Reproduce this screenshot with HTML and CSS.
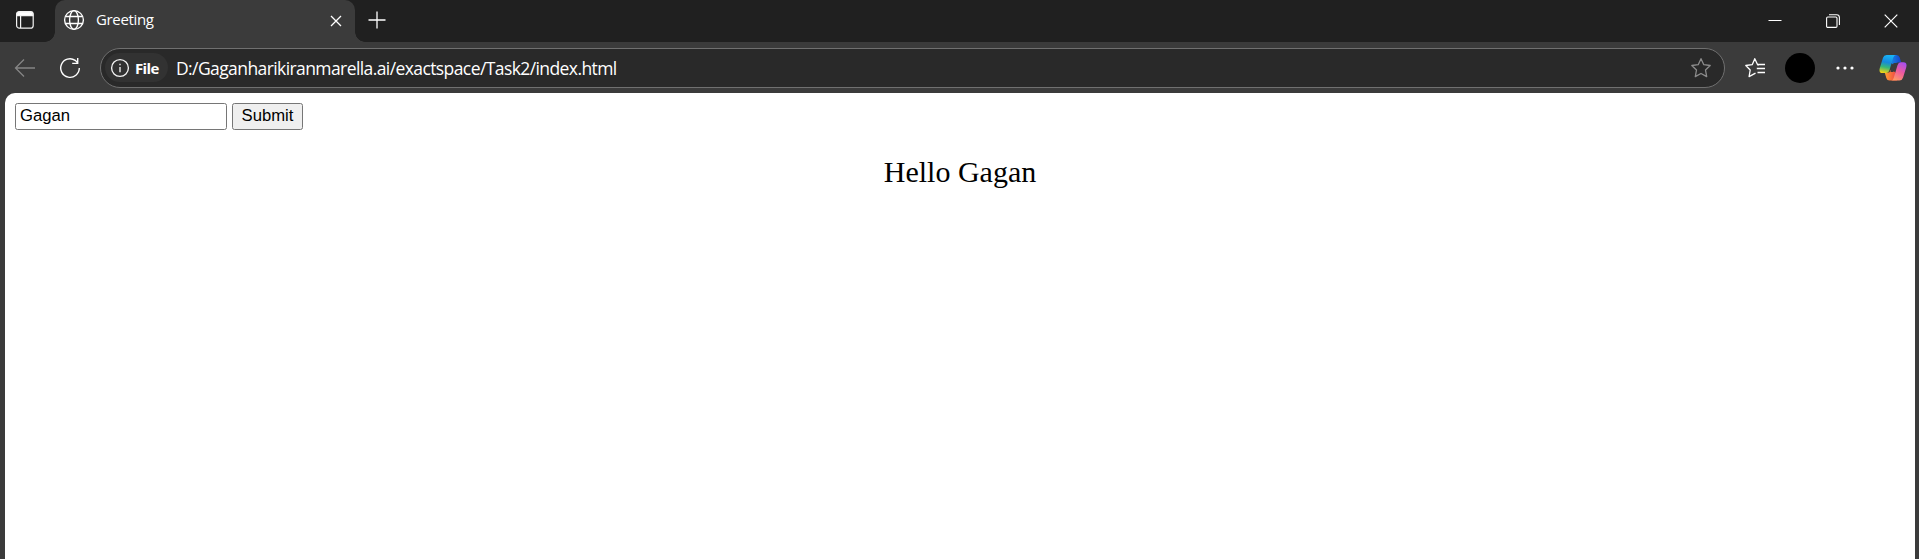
FILE: index.html
```html
<!DOCTYPE html>
<html lang="en">
<head>
<meta charset="utf-8">
<title>Greeting</title>
<link rel="stylesheet" href="styles.css">
</head>
<body>
<div class="browser">
  <header class="tab-strip">
    <div class="tab-actions">
      <svg width="20" height="20" viewBox="0 0 20 20" fill="none" stroke="#f2f2f2" stroke-width="1.2"><rect x="1.6" y="1.6" width="16.6" height="16.6" rx="2.8"/><path d="M2 4.5V3.6Q2 2 3.6 2h12.600q1.600 0 1.600 1.600v2H2z" fill="#fff"/><path d="M5.600 5v13"/></svg>
    </div>
    <div class="tab">
      <svg class="globe" width="22" height="22" viewBox="0 0 22 22" fill="none" stroke="#fff" stroke-width="1.350"><circle cx="11" cy="11" r="9.400"/><ellipse cx="11" cy="11" rx="4.400" ry="9.400"/><path d="M2.300 7.500h17.400M2.300 14.500h17.400"/></svg>
      <span class="tab-title">Greeting</span>
      <svg class="tab-close" width="12" height="12" viewBox="0 0 12 12" stroke="#fff" stroke-width="1.300"><path d="M1 1l10 10M11 1L1 11"/></svg>
    </div>
    <svg class="new-tab" width="18" height="18" viewBox="0 0 18 18" stroke="#fff" stroke-width="1.300"><path d="M9 .5v17M.5 9h17"/></svg>
    <div class="window-controls">
      <svg width="14" height="14" viewBox="0 0 14 14" stroke="#fff"><path d="M.5 6.500h13"/></svg>
      <svg width="14" height="14" viewBox="0 0 14 14" fill="none" stroke="#fff" stroke-width="1.100"><rect x=".6" y="3" width="10.400" height="10.400" rx="1.200"/><path d="M3 .7h7.600q2.800 0 2.800 2.800v7.500"/></svg>
      <svg width="14" height="14" viewBox="0 0 14 14" stroke="#fff" stroke-width="1.200"><path d="M.7.7l12.600 12.600M13.300.7L.7 13.300"/></svg>
    </div>
  </header>
  <nav class="toolbar">
    <svg class="back" width="22" height="20" viewBox="0 0 22 20" fill="none" stroke="#858585" stroke-width="1.300"><path d="M21 10H1.500M10 1.500L1.500 10l8.500 8.500"/></svg>
    <svg class="reload" width="22" height="22" viewBox="0 0 22 22" fill="none" stroke="#fff" stroke-width="1.400"><path d="M20.300 11a9.300 9.300 0 1 1-4.100-7.700l2.500 2.500M18.700 1v5.400h-5.500"/></svg>
    <div class="address">
      <div class="chip">
        <svg width="20" height="20" viewBox="0 0 20 20" fill="none" stroke="#f2f2f2" stroke-width="1.350"><circle cx="10" cy="10" r="8.400"/><path d="M10 9v5.200M10 5.800v1.500"/></svg>
        <span class="chip-label">File</span>
      </div>
      <span class="url">D:/Gaganharikiranmarella.ai/exactspace/Task2/index.html</span>
      <svg class="star" width="22" height="22" viewBox="0 0 22 22" fill="none" stroke="#8c8c8c" stroke-width="1.300" stroke-linejoin="round"><path d="M11 1.700l2.800 6 6.400.8-4.700 4.500 1.200 6.600-5.700-3.100-5.700 3.100 1.200-6.600L1.800 8.500l6.400-.8z"/></svg>
    </div>
    <svg class="favorites" width="22" height="22" viewBox="0 0 22 22" fill="none" stroke="#fff" stroke-width="1.300" stroke-linejoin="round"><path d="M14.500 8.400l-1-.8-2.700-5.900L8.200 7.700l-6.400.8L6.200 13l-1.100 6.600 6.400-3.500M13.500 7.500h7.500M12.800 11.500H21M13.500 15.500H21"/></svg>
    <div class="avatar"></div>
    <svg class="more" width="18" height="4" viewBox="0 0 18 4" fill="#fff"><circle cx="2" cy="2" r="1.600"/><circle cx="9" cy="2" r="1.600"/><circle cx="16" cy="2" r="1.600"/></svg>
    <svg class="copilot" width="28" height="28" viewBox="0 0 28 28">
      <defs>
        <linearGradient id="cool" x1=".5" y1="0" x2=".3" y2="1"><stop stop-color="#18b4f5"/><stop offset=".4" stop-color="#1688df"/><stop offset=".68" stop-color="#37b878"/><stop offset="1" stop-color="#f2d315"/></linearGradient>
        <linearGradient id="warm" x1=".8" y1="0" x2=".3" y2="1"><stop stop-color="#a54ef0"/><stop offset=".5" stop-color="#ee5a9e"/><stop offset="1" stop-color="#ff9a64"/></linearGradient>
        <linearGradient id="blue"><stop stop-color="#1793e8"/><stop offset="1" stop-color="#1742cc"/></linearGradient>
        <linearGradient id="red"><stop stop-color="#ffa02f"/><stop offset="1" stop-color="#ee4148"/></linearGradient>
      </defs>
      <path d="M10 1h7.500q2.400 0 3.200 2.500L22.200 8.500h-3.700q-2.300 0-3.400 2.500L12 9z" fill="url(#blue)"/>
      <path d="M18 26.500h-7.500q-2.400 0-3.200-2.500L5.800 18.700h2.700q2.300 0 3.200-2.500L16 18z" fill="url(#red)"/>
      <path d="M7.600 1H17q-2 0-2.700 2.500L10.500 16q-.9 3-3.400 3H3.500Q-.5 19 .8 14L4 3.700Q4.800 1 7.600 1z" fill="url(#cool)"/>
      <path d="M20.400 26.500H12q2 0 2.700-2.500l3.800-12.800q.9-2.900 3.300-2.900h2.700q4 0 2.700 5.100L24 23.800q-.8 2.700-3.600 2.700z" fill="url(#warm)"/>
      <path d="M14.600 9h2.600l-3 9h-2.800z" fill="#3b3b3b"/>
    </svg>
  </nav>
  <main class="page">
    <form class="form">
      <input class="name" type="text" value="Gagan">
      <button class="submit" type="button">Submit</button>
    </form>
    <p class="greeting">Hello Gagan</p>
  </main>
</div>
</body>
</html>
```
FILE: styles.css
```css
* { box-sizing: border-box; }
body { margin: 0; background: #3b3b3b; overflow: hidden; }
svg { display: block; flex: none; }
.browser { display: flex; flex-direction: column; width: 1919px; height: 559px; font-family: "Open Sans", sans-serif; color: #fff; }
.tab-strip { display: flex; height: 42px; background: #202020; flex: none; }
.tab-actions { width: 55px; padding: 10px 0 0 15px; }
.tab { position: relative; display: flex; width: 300px; height: 42px; padding-left: 8px; background: #3b3b3b; border-radius: 10px 10px 0 0; }
.tab::before, .tab::after { content: ""; position: absolute; bottom: 0; width: 10px; height: 10px; }
.tab::before { left: -10px; background: radial-gradient(circle at 0 0, transparent 9.500px, #3b3b3b 10px); }
.tab::after { right: -10px; background: radial-gradient(circle at 100% 0, transparent 9.500px, #3b3b3b 10px); }
.globe { margin-top: 9px; }
.tab-title { margin: 7px auto 0 11px; font-size: 15px; line-height: 24px; letter-spacing: -0.350px; }
.tab-close { margin: 15px 13px 0 0; }
.new-tab { margin: 11px 0 0 13px; }
.window-controls { display: flex; gap: 44px; margin: 14px 21px 0 auto; }
.toolbar { display: flex; align-items: center; height: 51px; flex: none; background: #3b3b3b; }
.back { margin-left: 14px; }
.reload { margin-left: 23px; }
.address { display: flex; align-items: center; width: 1625px; height: 40px; margin-left: 19px; padding: 0 12px 0 4px; border: 1px solid #707070; border-radius: 20px; background: #292929; }
.chip { display: flex; align-items: center; width: 63px; height: 29px; padding-left: 5px; gap: 5px; border-radius: 15px; background: #323232; }
.chip-label { font-size: 15px; font-weight: 700; line-height: 24px; letter-spacing: -0.650px; }
.url { margin: 0 auto 0 8px; font-size: 17.500px; line-height: 26px; letter-spacing: -0.590px; white-space: nowrap; }
.favorites { margin-left: 19px; }
.avatar { width: 30px; height: 30px; margin-left: 19px; border-radius: 50%; background: #000; }
.more { margin-left: 21px; }
.copilot { margin-left: 25px; }
.page { flex: 1; margin: 0 4px 0 5px; padding: 10px; background: #fff; border-radius: 10px 10px 0 0; color: #000; }
.form { display: flex; gap: 5px; margin: 0; }
.name, .submit { height: 27px; border: 1px solid #767676; border-radius: 2.500px; font: 16.667px "Liberation Sans", Arial, sans-serif; color: #000; }
.name { width: 212px; padding: 0 4px 2px; background: #fff; }
.submit { width: 71px; padding: 0 0 2px; background: #efefef; }
.greeting { margin: 24px 0 0; text-align: center; font: 30px/36px "Liberation Serif", "Times New Roman", serif; }
```
